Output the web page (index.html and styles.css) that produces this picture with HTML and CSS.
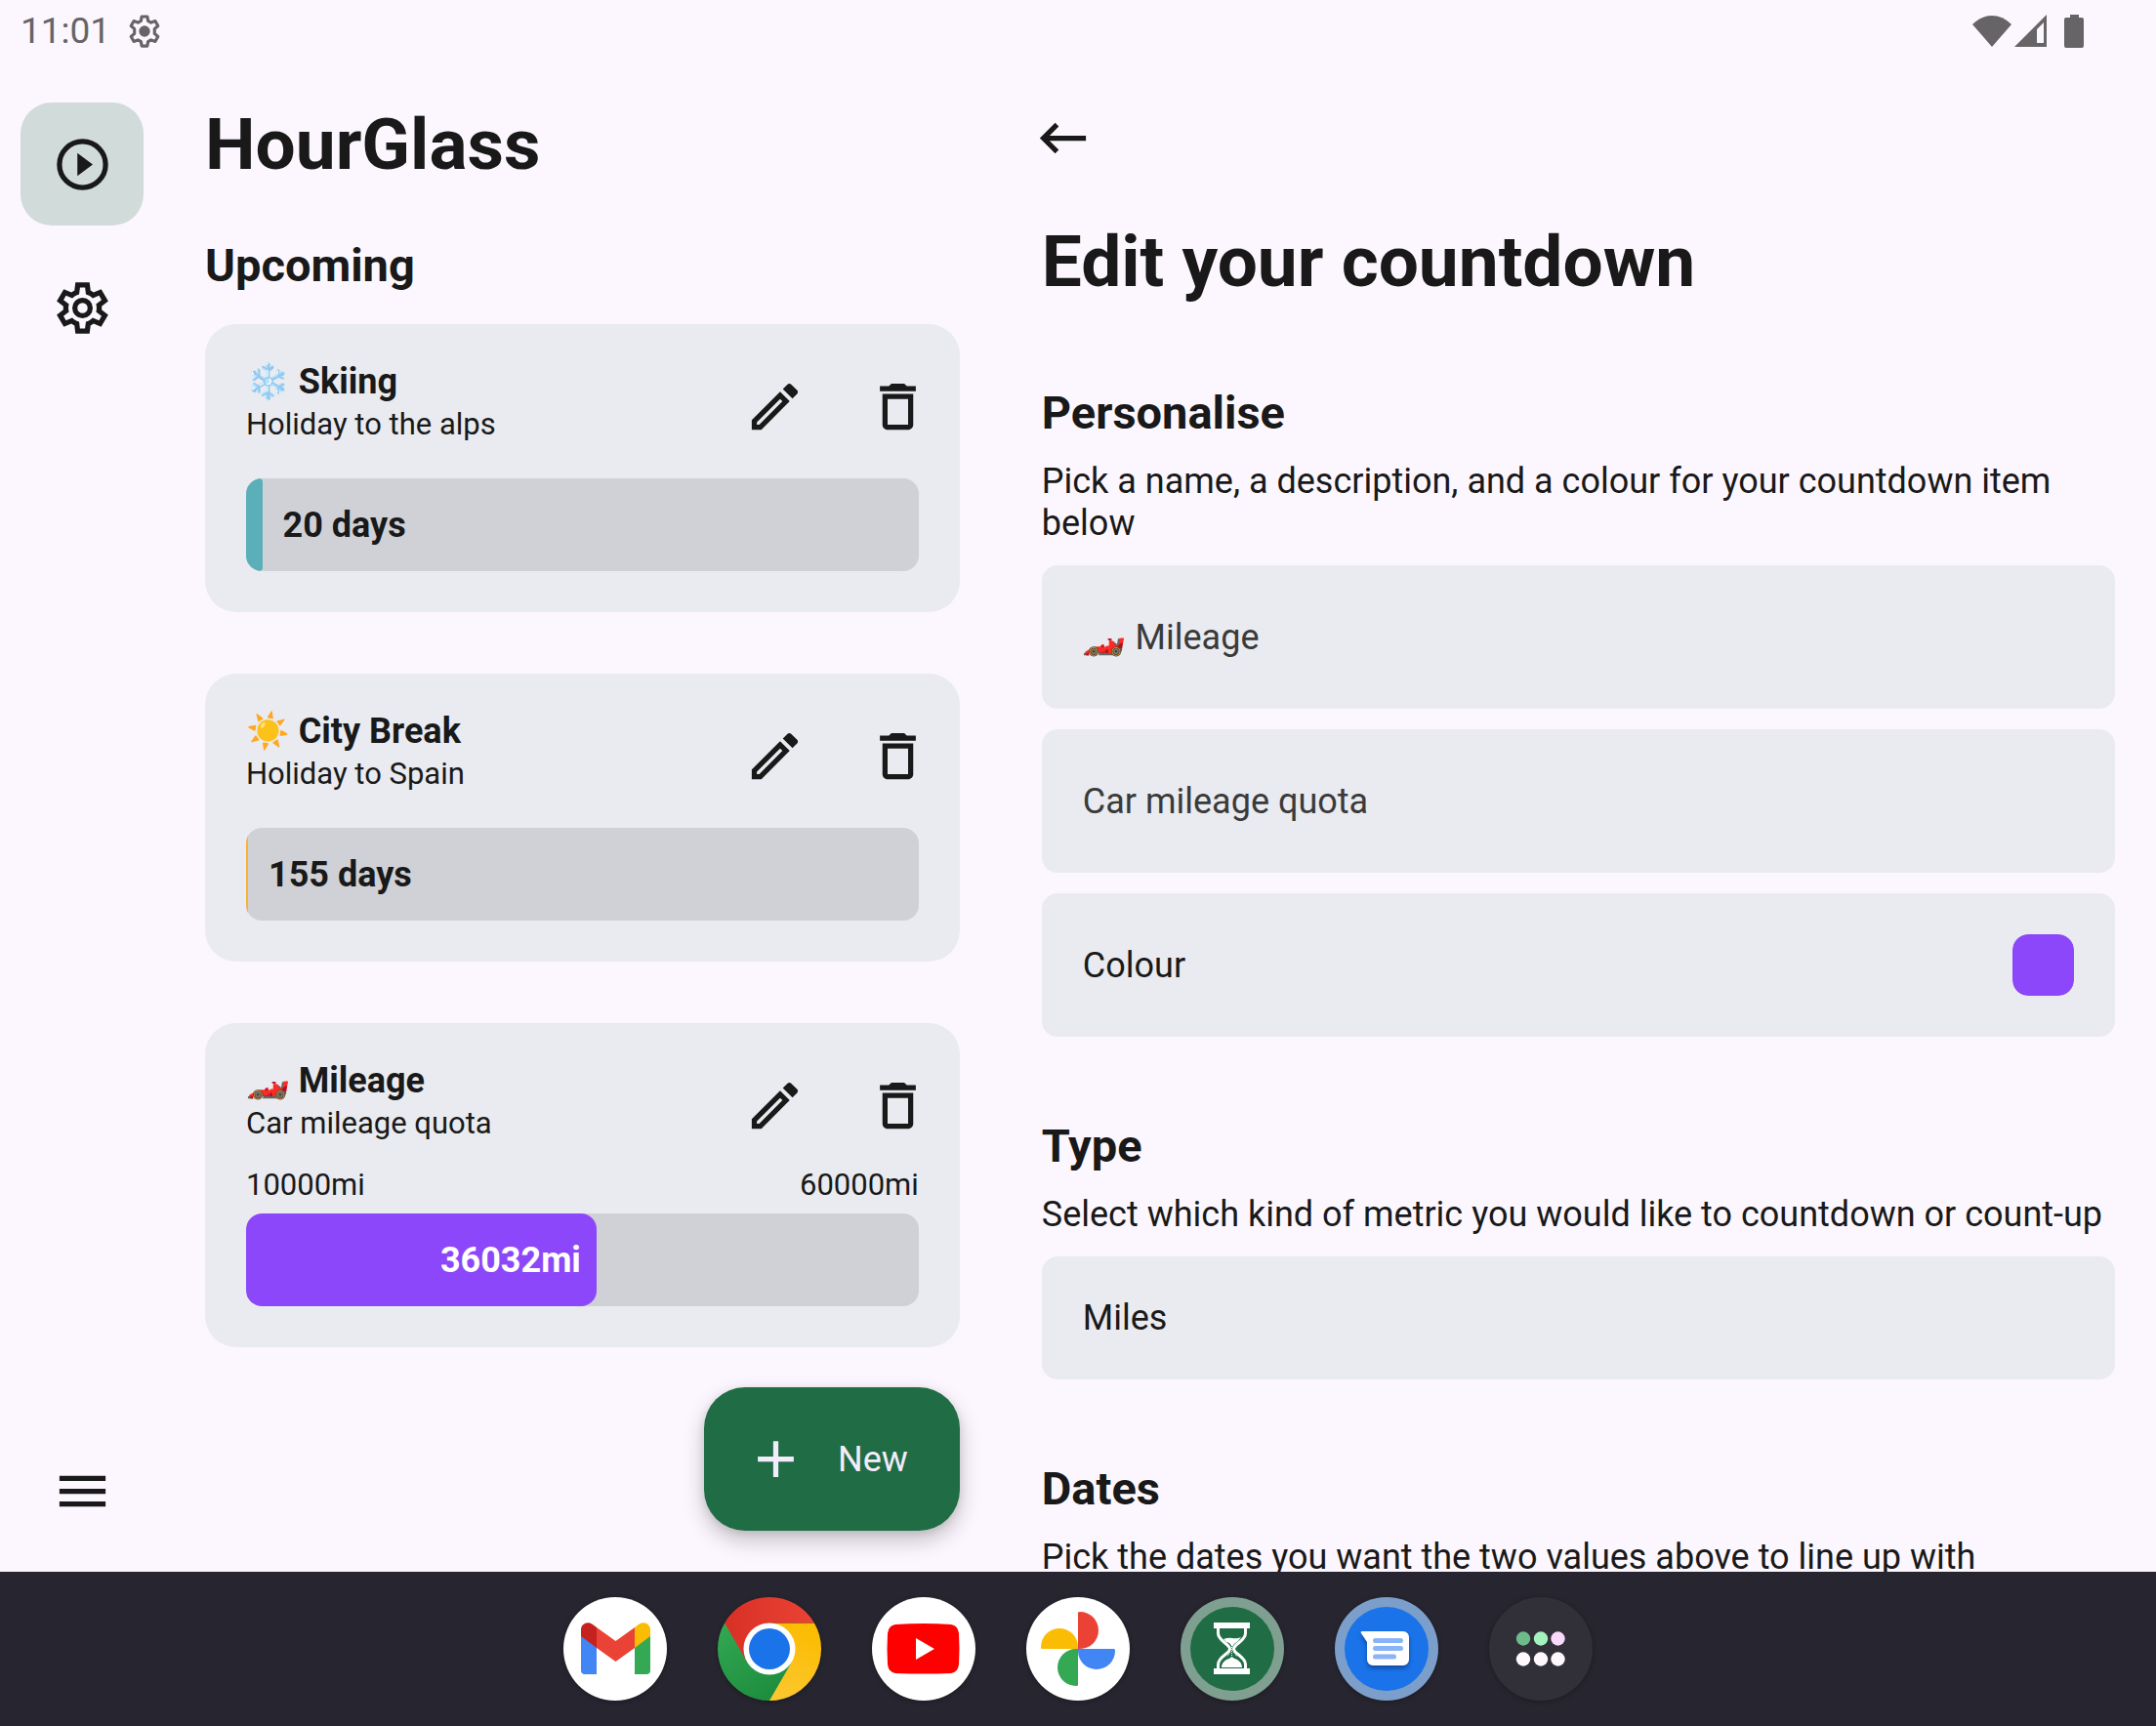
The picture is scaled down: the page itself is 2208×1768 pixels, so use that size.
FILE: index.html
```html
<!DOCTYPE html>
<html lang="en">
<head>
<meta charset="utf-8">
<meta name="viewport" content="width=device-width, initial-scale=1">
<title>HourGlass</title>
<link rel="stylesheet" href="styles.css">
</head>
<body>
<svg class="sprite" aria-hidden="true">
  <symbol id="gear" viewBox="0 0 24 24"><path d="m9.250 22-.4-3.200q-.325-.125-.612-.3-.288-.175-.563-.375L4.700 19.375l-2.750-4.750 2.575-1.950Q4.500 12.500 4.500 12.337v-.675q0-.162.025-.337L1.950 9.375l2.750-4.750 2.975 1.250q.275-.2.575-.375.3-.175.6-.3l.4-3.200h5.500l.4 3.200q.325.125.613.3.287.175.562.375l2.975-1.250 2.750 4.750-2.575 1.950q.025.175.025.337v.675q0 .163-.050.338l2.575 1.950-2.750 4.750-2.950-1.250q-.275.2-.575.375-.3.175-.6.3l-.4 3.200ZM11 20h1.975l.35-2.650q.775-.2 1.438-.588.662-.387 1.212-.937l2.475 1.025.975-1.700-2.150-1.625q.125-.35.175-.738.050-.387.050-.787t-.050-.788q-.050-.387-.175-.737l2.150-1.625-.975-1.700-2.475 1.050q-.55-.575-1.212-.963-.663-.387-1.438-.587L13 4h-1.975l-.35 2.650q-.775.2-1.437.587-.663.388-1.213.938L5.550 7.150l-.975 1.700 2.150 1.600q-.125.375-.175.750-.050.375-.050.8 0 .4.050.775t.175.750l-2.150 1.625.975 1.700 2.475-1.050q.55.575 1.213.962.662.388 1.437.588Z"/><circle cx="12" cy="12" r="3" fill="none" stroke="currentColor" stroke-width="2"/></symbol>
  <symbol id="edit" viewBox="0 0 24 24"><path d="M14.060 9.020l.92.92L5.920 19H5v-.92l9.060-9.060M17.660 3c-.25 0-.51.1-.7.29l-1.830 1.830 3.750 3.750 1.830-1.830c.39-.39.39-1.020 0-1.410l-2.340-2.340c-.2-.2-.45-.29-.71-.29zm-3.600 3.190L3 17.250V21h3.750L17.810 9.940l-3.750-3.750z"/></symbol>
  <symbol id="trash" viewBox="0 0 24 24"><path d="M16 9v10H8V9h8m-1.500-6h-5l-1 1H5v2h14V4h-3.500l-1-1zM18 7H6v12c0 1.100.9 2 2 2h8c1.100 0 2-.9 2-2V7z"/></symbol>
</svg>

<header class="status">
  <span class="clock">11:01</span>
  <svg class="status-gear" viewBox="0 0 24 24" aria-hidden="true"><path fill="none" stroke="currentColor" stroke-width="2" stroke-linejoin="round" d="M10.200 2.500h3.600l.5 2.800 1.900 1.100 2.700-1 1.800 3.100-2.200 2v3l2.200 2-1.800 3.100-2.700-1-1.900 1.100-.5 2.800h-3.600l-.5-2.800-1.900-1.100-2.700 1-1.800-3.100 2.200-2v-3l-2.200-2 1.800-3.100 2.700 1 1.900-1.100z"/><circle cx="12" cy="12" r="3.600" fill="currentColor"/></svg>
  <div class="status-end">
    <svg class="wifi" viewBox="0 0 40 32" aria-hidden="true"><path d="M20 32 0 9Q9 0 20 0t20 9z"/></svg>
    <svg class="signal" viewBox="0 0 33 33" aria-hidden="true"><path fill-rule="evenodd" d="M33 0v33H0zM30 8l-7 7v14h7z"/></svg>
    <svg class="battery" viewBox="0 0 20 34" aria-hidden="true"><path d="M6 0h9v3h3a2 2 0 0 1 2 2v27a2 2 0 0 1-2 2H2a2 2 0 0 1-2-2V5a2 2 0 0 1 2-2h4z"/></svg>
  </div>
</header>

<div class="app">
  <nav class="rail" aria-label="Main">
    <a class="rail-item active" href="#countdowns" aria-label="Countdowns"><svg class="icon" viewBox="0 0 24 24"><path d="m10 16.500 6-4.500-6-4.500z"/><circle cx="12" cy="12" r="9" fill="none" stroke="currentColor" stroke-width="2"/></svg></a>
    <a class="rail-item" href="#settings" aria-label="Settings"><svg class="icon"><use href="#gear"/></svg></a>
    <button class="rail-item rail-menu" type="button" aria-label="Menu"><svg class="icon" viewBox="0 0 24 24"><path d="M3 18h18v-2H3zm0-5h18v-2H3zm0-7v2h18V6z"/></svg></button>
  </nav>

  <main class="list" id="countdowns">
    <h1>HourGlass</h1>
    <h2>Upcoming</h2>
    <div class="cards">
      <article class="card">
        <div class="card-head">
          <div class="card-text"><h3>❄️ Skiing</h3><p>Holiday to the alps</p></div>
          <button class="card-action" type="button" aria-label="Edit Skiing"><svg class="icon"><use href="#edit"/></svg></button>
          <button class="card-action" type="button" aria-label="Delete Skiing"><svg class="icon"><use href="#trash"/></svg></button>
        </div>
        <div class="bar"><div class="fill teal" style="width:2.4%"></div><span class="bar-label">20 days</span></div>
      </article>
      <article class="card">
        <div class="card-head">
          <div class="card-text"><h3>☀️ City Break</h3><p>Holiday to Spain</p></div>
          <button class="card-action" type="button" aria-label="Edit City Break"><svg class="icon"><use href="#edit"/></svg></button>
          <button class="card-action" type="button" aria-label="Delete City Break"><svg class="icon"><use href="#trash"/></svg></button>
        </div>
        <div class="bar"><div class="fill amber" style="width:0.3%"></div><span class="bar-label">155 days</span></div>
      </article>
      <article class="card">
        <div class="card-head">
          <div class="card-text"><h3>🏎️ Mileage</h3><p>Car mileage quota</p></div>
          <button class="card-action" type="button" aria-label="Edit Mileage"><svg class="icon"><use href="#edit"/></svg></button>
          <button class="card-action" type="button" aria-label="Delete Mileage"><svg class="icon"><use href="#trash"/></svg></button>
        </div>
        <div class="range"><span>10000mi</span><span>60000mi</span></div>
        <div class="bar"><div class="fill purple" style="width:52.1%"><span>36032mi</span></div></div>
      </article>
    </div>
    <button class="fab" type="button"><svg class="icon" viewBox="0 0 24 24" aria-hidden="true"><path d="M19 13h-6v6h-2v-6H5v-2h6V5h2v6h6z"/></svg>New</button>
  </main>

  <section class="detail">
    <button class="back" type="button" aria-label="Back"><svg class="icon" viewBox="0 0 24 24"><path d="M21 11H6.830l3.580-3.590L9 6l-6 6 6 6 1.410-1.410L6.830 13H21z"/></svg></button>
    <h1>Edit your countdown</h1>
    <form class="form">
      <div class="group">
        <h2>Personalise</h2>
        <p>Pick a name, a description, and a colour for your countdown item below</p>
        <input class="field" type="text" aria-label="Name" value="🏎️ Mileage">
        <input class="field" type="text" aria-label="Description" value="Car mileage quota">
        <div class="field colour"><label for="colour">Colour</label><input id="colour" type="color" value="#8c47fb"></div>
      </div>
      <div class="group">
        <h2 id="type-title">Type</h2>
        <p>Select which kind of metric you would like to countdown or count-up</p>
        <select class="field type" aria-labelledby="type-title"><option>Miles</option></select>
      </div>
      <div class="group">
        <h2>Dates</h2>
        <p>Pick the dates you want the two values above to line up with</p>
      </div>
    </form>
  </section>
</div>

<footer class="taskbar">
  <button class="app-icon" type="button" aria-label="Gmail"><svg viewBox="0 0 106 106"><circle cx="53" cy="53" r="53" fill="#fff"/><path fill="#4285f4" d="m18 39 16 12v28H22a4 4 0 0 1-4-4z"/><path fill="#34a853" d="M89 39 73 51v28h12a4 4 0 0 0 4-4z"/><path fill="#fbbc04" d="m73 31 4-3c5-4 12-1 12 5.500V40L73 52z"/><path fill="#c5221f" d="m34 31-4-3c-5-4-12-1-12 5.500V40l16 12z"/><path fill="#ea4335" d="m34 31 19.500 14L73 31v21L53.500 66 34 52z"/></svg></button>
  <button class="app-icon" type="button" aria-label="Chrome"><svg viewBox="0 0 106 106">
    <defs>
      <linearGradient id="cr" x1="0" x2="1"><stop offset="0" stop-color="#d93025"/><stop offset="1" stop-color="#ea4335"/></linearGradient>
      <linearGradient id="cg" x1="0" y1="0" x2=".6" y2="1"><stop offset="0" stop-color="#34a853"/><stop offset="1" stop-color="#1e8e3e"/></linearGradient>
      <linearGradient id="cy" x1="0" y1="1" x2=".3" y2="0"><stop offset="0" stop-color="#fcc934"/><stop offset="1" stop-color="#fbbc04"/></linearGradient>
    </defs>
    <path fill="url(#cy)" d="M53 26.500h45.900A53 53 0 0 1 53 106l-2-40z"/><path fill="url(#cg)" d="M7.100 26.500A53 53 0 0 0 53 106l23-39.800L45 60z"/><path fill="url(#cr)" d="M7.100 26.500a53 53 0 0 1 91.800 0H53L30 66.200z"/><circle cx="53" cy="53" r="26.500" fill="#fff"/><circle cx="53" cy="53" r="21" fill="#1a73e8"/></svg></button>
  <button class="app-icon" type="button" aria-label="YouTube"><svg viewBox="0 0 106 106"><circle cx="53" cy="53" r="53" fill="#fff"/><path fill="red" d="M24 28q29-2 57 0 7 1 8 9 1 16 0 32-1 8-8 9-28 1-57 0-7-1-8-9-1-16 0-32 1-8 8-9z"/><path fill="#fff" d="M45 42v22l19-11z"/></svg></button>
  <button class="app-icon" type="button" aria-label="Photos"><svg viewBox="0 0 106 106"><circle cx="53" cy="53" r="53" fill="#fff"/><path fill="#ea4335" d="M53 53V16q0-1 2-1a19 19 0 0 1 0 38z"/><path fill="#4285f4" d="M53 53h37q1 0 1 2a19 19 0 0 1-38 0z"/><path fill="#34a853" d="M53 53v37q0 1-2 1a19 19 0 0 1 0-38z"/><path fill="#fbbc04" d="M53 53H16q-1 0-1-2a19 19 0 0 1 38 0z"/></svg></button>
  <button class="app-icon" type="button" aria-label="HourGlass"><svg viewBox="0 0 106 106"><circle cx="53" cy="53" r="53" fill="#7f9f90"/><circle cx="53" cy="53" r="43" fill="#206d45"/><path fill="#fff" d="M34 26h37v6H34zM34 73h37v6H34zM44 43q5-2 9-1 5 1 9-1-3 5-7 7l-2 3-3-4q-4-1-6-4zM42 72q0-5 5-8 4-1 5.500-3 2 2 5.500 3 5 3 5 8z"/><path fill="none" stroke="#fff" stroke-width="3" d="M38.500 32v5c0 8 12 11 12 16s-12 8-12 16v5M66.500 32v5c0 8-12 11-12 16s12 8 12 16v5"/><path fill="none" stroke="#fff" stroke-width="1" stroke-dasharray="1 1" d="M52.500 51v10M51 56l-3 5M54 56l4 5"/></svg></button>
  <button class="app-icon" type="button" aria-label="Messages"><svg viewBox="0 0 106 106"><circle cx="53" cy="53" r="53" fill="#7c9ecb"/><circle cx="53" cy="53" r="43" fill="#1a73e8"/><path class="bubble" fill="#fff" d="M28 35h42a6 6 0 0 1 6 6v23a6 6 0 0 1-6 6H39a6 6 0 0 1-6-6V46l-6-9q-1-2 1-2z"/><path stroke="#8ab4f8" stroke-width="5" stroke-linecap="round" d="M41.500 44.500h26M41.500 52.500h26M41.500 61h19"/></svg></button>
  <button class="app-icon" type="button" aria-label="All apps"><svg viewBox="0 0 106 106"><circle cx="53" cy="53" r="53" fill="#312f38"/><circle cx="35" cy="42.500" r="7.200" fill="#6dba8a"/><circle cx="53" cy="42.500" r="7.200" fill="#a4f3bf"/><circle cx="70.500" cy="42.500" r="7.200" fill="#f8d8fb"/><g fill="#fef7fc"><circle cx="35" cy="63.500" r="7.200"/><circle cx="53" cy="63.500" r="7.200"/><circle cx="70.500" cy="63.500" r="7.200"/></g></svg></button>
</footer>
</body>
</html>
```
FILE: styles.css
```css
:root {
  --bg: #fcf7fe;
  --surface: #e9ebf0;
  --track: #d0d1d6;
  --ink: #191919;
  --purple: #8c47fb;
  --green: #206d45;
}

* {
  box-sizing: border-box;
}

body {
  margin: 0;
  height: 100vh;
  display: flex;
  flex-direction: column;
  background: var(--bg);
  color: var(--ink);
  font: 36px/44px Roboto, "Liberation Sans", "Noto Color Emoji", sans-serif;
}

h1, h2, h3, p {
  margin: 0;
}

h1 {
  font-size: 73px;
  line-height: 86px;
}

h2 {
  font-size: 47px;
  line-height: 56px;
}

button {
  padding: 0;
  border: 0;
  background: none;
  color: inherit;
  font: inherit;
}

svg {
  display: block;
  fill: currentColor;
}

.sprite {
  position: absolute;
  width: 0;
  height: 0;
}

.icon {
  width: 63px;
  height: 63px;
  flex: none;
}

/* Status bar */
.status {
  display: flex;
  align-items: center;
  flex: none;
  height: 63px;
  padding: 0 74px 0 21px;
  color: #666467;
}

.clock {
  font-size: 37px;
}

.status-gear {
  width: 38px;
  height: 38px;
  margin-left: 16px;
}

.status-end {
  display: flex;
  align-items: center;
  margin-left: auto;
}

.wifi {
  width: 40px;
  height: 32px;
}

.signal {
  width: 33px;
  height: 33px;
  margin-left: 3px;
}

.battery {
  width: 20px;
  height: 34px;
  margin-left: 18px;
}

/* Panes */
.app {
  flex: 1;
  min-height: 0;
  display: grid;
  grid-template-columns: 168px minmax(0, 42fr) minmax(0, 58fr);
  overflow: hidden;
}

.rail {
  display: flex;
  flex-direction: column;
  align-items: center;
  gap: 21px;
  padding: 42px 21px 20px;
}

.rail-item {
  display: grid;
  place-items: center;
  width: 126px;
  height: 126px;
  border-radius: 32px;
  color: inherit;
}

.rail-item.active {
  background: #d1dbda;
}

.rail-menu {
  margin-top: auto;
}

.list {
  position: relative;
  min-height: 0;
  padding: 42px;
}

.list h2 {
  margin: 53px 0 32px;
}

.cards {
  display: grid;
  gap: 63px;
}

.card {
  padding: 21px 0 42px;
  border-radius: 32px;
  background: var(--surface);
}

.card-head {
  display: flex;
  padding-left: 42px;
}

.card-text {
  flex: 1;
  padding-top: 14px;
}

.card-text h3 {
  font-size: 36px;
  line-height: 48px;
}

.card-text p {
  font-size: 31px;
  line-height: 40px;
}

.card-action {
  display: grid;
  place-items: center;
  width: 126px;
  height: 126px;
}

.range {
  display: flex;
  justify-content: space-between;
  padding: 0 42px;
  font-size: 31px;
  line-height: 37px;
}

.bar {
  display: flex;
  align-items: center;
  height: 95px;
  margin: 11px 42px 0;
  overflow: hidden;
  border-radius: 16px;
  background: var(--track);
  font-weight: 700;
}

.bar-label {
  margin-left: 21px;
}

.fill {
  display: flex;
  align-items: center;
  justify-content: flex-end;
  height: 100%;
  border-radius: 16px;
}

.fill.teal {
  border-radius: 16px 5px 5px 16px;
  background: #5aafb8;
}

.fill.amber {
  border-radius: 0;
  background: #f9b233;
}

.fill.purple {
  padding-right: 16px;
  background: var(--purple);
  color: #fff;
}

.fab {
  position: absolute;
  right: 42px;
  bottom: 42px;
  display: flex;
  align-items: center;
  gap: 32px;
  height: 147px;
  padding: 0 53px 0 42px;
  border-radius: 42px;
  background: var(--green);
  box-shadow: 0 10px 22px rgba(0, 0, 0, 0.22), 0 2px 8px rgba(0, 0, 0, 0.1);
  color: #f3ecfb;
}

/* Edit pane */
.detail {
  min-height: 0;
  padding: 47px 42px 0;
  overflow: hidden;
}

.back {
  display: block;
  margin: 0 0 52px -10px;
}

.form {
  display: grid;
  gap: 84px;
  margin-top: 84px;
}

.group {
  display: grid;
  gap: 21px;
}

.field {
  width: 100%;
  height: 147px;
  margin: 0;
  padding: 0 42px;
  border: 0;
  border-radius: 16px;
  background: var(--surface);
  color: #3a3a3a;
  font: inherit;
}

.group p {
  line-height: 43px;
}

.field.colour {
  display: flex;
  align-items: center;
  justify-content: space-between;
  color: var(--ink);
}

.field.type {
  height: 126px;
  appearance: none;
  color: var(--ink);
}

input[type="color"] {
  width: 63px;
  height: 63px;
  padding: 0;
  border: 0;
  border-radius: 16px;
  overflow: hidden;
  background: none;
  appearance: none;
}

input[type="color"]::-webkit-color-swatch-wrapper {
  padding: 0;
}

input[type="color"]::-webkit-color-swatch {
  border: 0;
  border-radius: 16px;
}

/* Taskbar */
.taskbar {
  display: flex;
  align-items: center;
  justify-content: center;
  gap: 52px;
  flex: none;
  height: 158px;
  background: #27252f;
}

.app-icon {
  width: 106px;
  height: 106px;
  border-radius: 50%;
  box-shadow: 0 1px 5px rgba(0, 0, 0, 0.3);
}

.bubble {
  filter: drop-shadow(0 3px 2px rgba(10, 50, 120, 0.6));
}
```
